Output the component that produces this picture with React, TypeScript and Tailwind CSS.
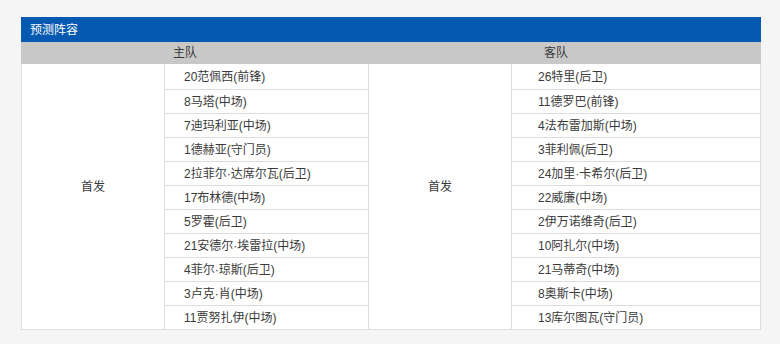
const home = [
  "20范佩西(前锋)",
  "8马塔(中场)",
  "7迪玛利亚(中场)",
  "1德赫亚(守门员)",
  "2拉菲尔·达席尔瓦(后卫)",
  "17布林德(中场)",
  "5罗霍(后卫)",
  "21安德尔·埃雷拉(中场)",
  "4菲尔·琼斯(后卫)",
  "3卢克·肖(中场)",
  "11贾努扎伊(中场)",
];

const away = [
  "26特里(后卫)",
  "11德罗巴(前锋)",
  "4法布雷加斯(中场)",
  "3菲利佩(后卫)",
  "24加里·卡希尔(后卫)",
  "22威廉(中场)",
  "2伊万诺维奇(后卫)",
  "10阿扎尔(中场)",
  "21马蒂奇(中场)",
  "8奥斯卡(中场)",
  "13库尔图瓦(守门员)",
];

function PlayerList({ names, pad }: { names: string[]; pad: string }) {
  return (
    <div className="flex flex-col">
      {names.map((n, i) => (
        <div
          key={n}
          className={`flex items-center ${pad} ${i > 0 ? "border-t border-[#dddddd]" : ""} ${i === 0 ? "h-[25px]" : "h-[24px]"}`}
        >
          {n}
        </div>
      ))}
    </div>
  );
}

export default function App() {
  return (
    <div
      className="w-[780px] h-[344px] bg-[#f5f5f5] pt-[17px] pl-[21px] text-[12px] text-[#3a3a3a]"
      style={{ fontFamily: '"Liberation Sans", "Noto Sans CJK SC", sans-serif' }}
    >
      <div className="w-[740px] bg-white">
        {/* Title bar */}
        <div className="h-[25px] bg-[#0559b0] text-white flex items-center pl-[9px]">
          预测阵容
        </div>

        {/* Team header */}
        <div className="h-[22px] bg-[#c8c8c8] flex items-center">
          <div className="w-[328px] text-center">主队</div>
          <div className="flex-1 text-center pl-[2px]">客队</div>
        </div>

        {/* Lineup body */}
        <div className="flex border-x border-b border-[#dddddd]">
          <div className="w-[142px] flex items-center justify-center pb-[20px]">
            首发
          </div>
          <div className="w-[204px] border-l border-[#dddddd]">
            <PlayerList names={home} pad="pl-[19px]" />
          </div>
          <div className="w-[143px] border-l border-[#dddddd] flex items-center justify-center pb-[20px]">
            首发
          </div>
          <div className="flex-1 border-l border-[#dddddd]">
            <PlayerList names={away} pad="pl-[26px]" />
          </div>
        </div>
      </div>
    </div>
  );
}
